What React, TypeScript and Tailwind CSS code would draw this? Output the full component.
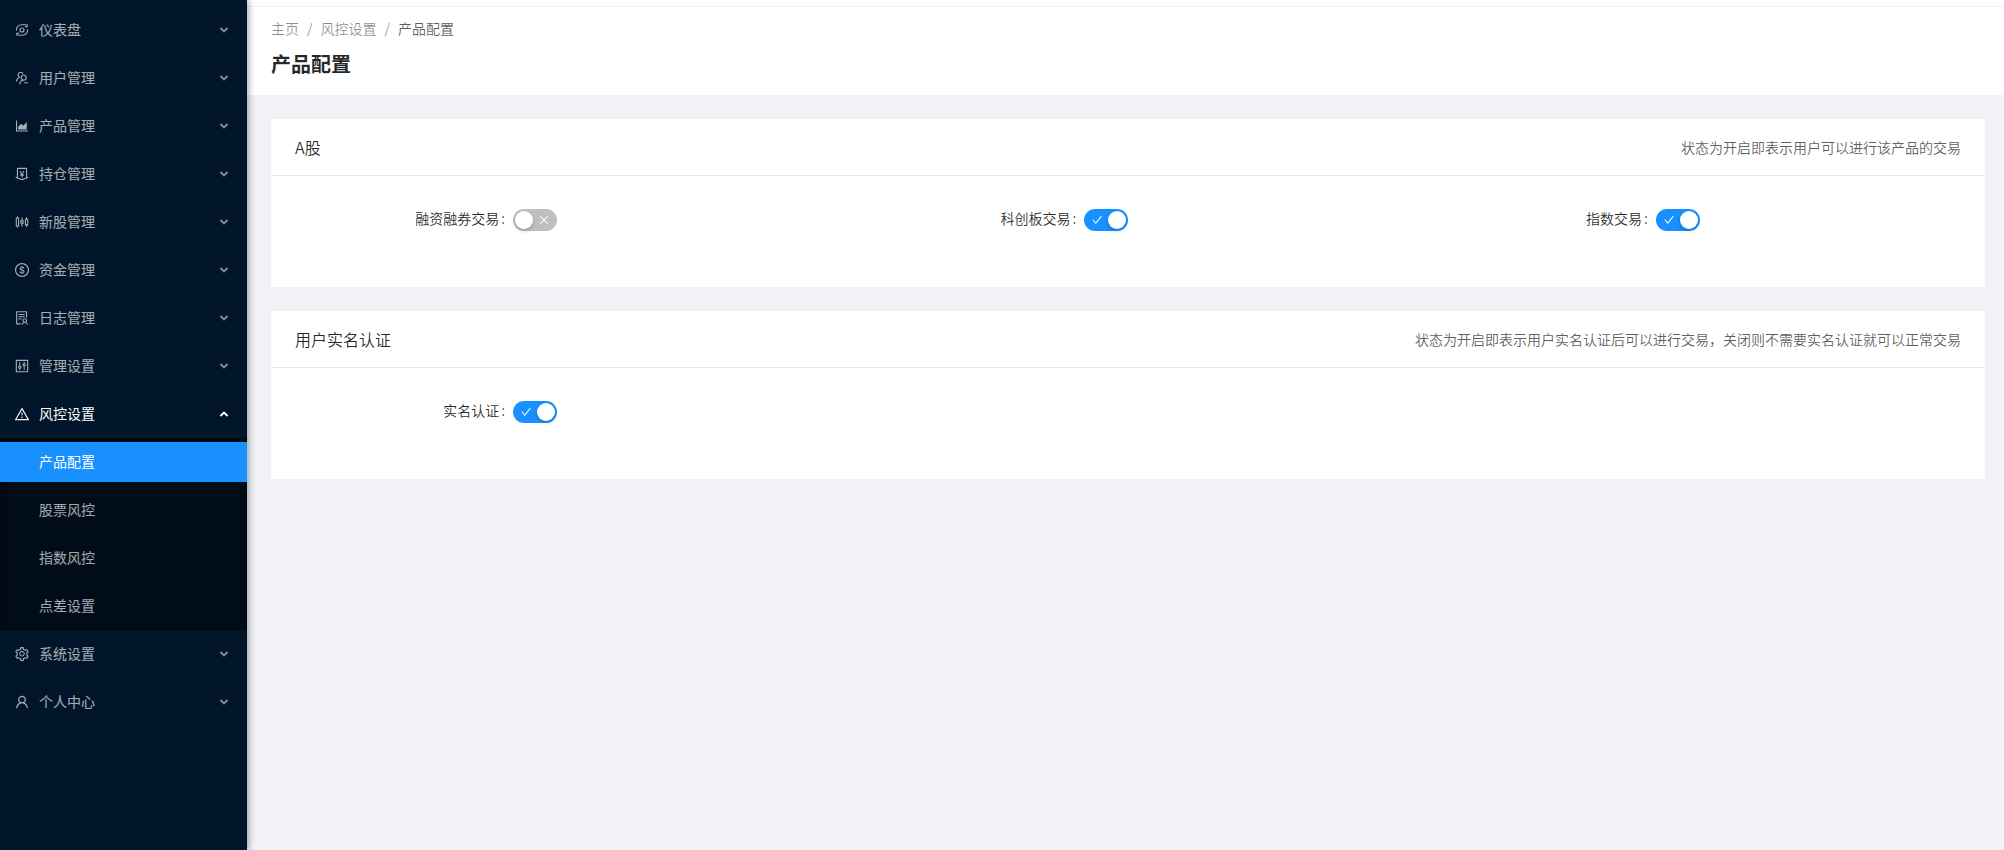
import { useId, useState } from "react";
import type { ReactNode } from "react";
import type { IconType } from "react-icons";
import {
  AiOutlineAreaChart,
  AiOutlineCheck,
  AiOutlineClose,
  AiOutlineControl,
  AiOutlineDollar,
  AiOutlineMoneyCollect,
  AiOutlineSetting,
  AiOutlineSliders,
  AiOutlineSolution,
  AiOutlineUser,
  AiOutlineUsergroupDelete,
  AiOutlineWarning,
} from "react-icons/ai";

type MenuEntry = {
  label: string;
  icon: IconType | typeof DashboardIcon;
  children?: string[];
};

function DashboardIcon({ className }: { className?: string }) {
  return (
    <svg
      viewBox="0 0 16 16"
      fill="none"
      stroke="currentColor"
      strokeWidth="1.1"
      className={className}
      aria-hidden="true"
    >
      <circle cx="8" cy="8" r="2" />
      <path d="M2.4 8.6C2 5.2 4.4 2.8 8 2.8h4.4" />
      <path d="M11 4.6h2.2V2.2" />
      <path d="M13.6 7.4c.4 3.4-2 5.8-5.6 5.8H3.6" />
      <path d="M5 11.4H2.8v2.4" />
    </svg>
  );
}

const MENU: MenuEntry[] = [
  { label: "仪表盘", icon: DashboardIcon },
  { label: "用户管理", icon: AiOutlineUsergroupDelete },
  { label: "产品管理", icon: AiOutlineAreaChart },
  { label: "持仓管理", icon: AiOutlineMoneyCollect },
  { label: "新股管理", icon: AiOutlineSliders },
  { label: "资金管理", icon: AiOutlineDollar },
  { label: "日志管理", icon: AiOutlineSolution },
  { label: "管理设置", icon: AiOutlineControl },
  {
    label: "风控设置",
    icon: AiOutlineWarning,
    children: ["产品配置", "股票风控", "指数风控", "点差设置"],
  },
  { label: "系统设置", icon: AiOutlineSetting },
  { label: "个人中心", icon: AiOutlineUser },
];

function Arrow({ open }: { open: boolean }) {
  return (
    <svg
      viewBox="0 0 10 8"
      fill="none"
      stroke="currentColor"
      strokeWidth="1.8"
      className={`h-2 w-2.5 ${open ? "rotate-180" : "opacity-80"}`}
      aria-hidden="true"
    >
      <path d="M1.4 2L5 5.4 8.6 2" />
    </svg>
  );
}

function Sidebar() {
  const [open, setOpen] = useState("风控设置");
  const [selected, setSelected] = useState("产品配置");

  return (
    <aside className="relative z-10 w-[247px] shrink-0 bg-[#001529] pt-1.5 shadow-[2px_0_6px_rgba(0,21,41,0.35)]">
      <nav>
        <ul>
          {MENU.map(({ label, icon: Icon, children }) => {
            const isOpen = open === label;
            return (
              <li key={label}>
                <div className="py-1">
                  <button
                    onClick={() => setOpen(isOpen ? "" : label)}
                    className={`flex h-10 w-full items-center pl-3.5 pr-[18px] text-sm hover:text-white ${
                      isOpen ? "text-white" : "text-white/65"
                    }`}
                  >
                    <Icon className="mr-[9px] h-4 w-4" />
                    <span className="pb-0.5 font-normal">{label}</span>
                    <span className="ml-auto">
                      <Arrow open={isOpen} />
                    </span>
                  </button>
                </div>
                {isOpen && children && (
                  <ul className="bg-[#000c17] shadow-[inset_0_2px_8px_rgba(0,0,0,0.45)]">
                    {children.map((child) => (
                      <li key={child} className="py-1">
                        <a
                          href="#"
                          onClick={() => setSelected(child)}
                          className={`flex h-10 items-center pb-0.5 pl-[39px] text-sm font-normal hover:text-white ${
                            selected === child
                              ? "bg-[#1890ff] text-white"
                              : "text-white/65"
                          }`}
                        >
                          {child}
                        </a>
                      </li>
                    ))}
                  </ul>
                )}
              </li>
            );
          })}
        </ul>
      </nav>
    </aside>
  );
}

function SwitchField({
  label,
  defaultChecked = false,
}: {
  label: string;
  defaultChecked?: boolean;
}) {
  const id = useId();
  const [checked, setChecked] = useState(defaultChecked);

  return (
    <div className="grid h-10 grid-cols-[5fr_7fr] items-center">
      <label
        htmlFor={id}
        className="pr-2 pb-1 text-right text-sm text-black/85"
      >
        {label}
        <span className="ml-0.5">:</span>
      </label>
      <button
        id={id}
        role="switch"
        aria-checked={checked}
        onClick={() => setChecked(!checked)}
        className={`flex h-[22px] w-11 items-center justify-between rounded-full px-0.5 text-white ${
          checked ? "flex-row-reverse bg-[#1890ff]" : "bg-black/25"
        }`}
      >
        <span className="h-[18px] w-[18px] rounded-full bg-white shadow-[0_2px_4px_rgba(0,35,11,0.2)]" />
        {checked ? (
          <AiOutlineCheck className="ml-[5px] h-3 w-3" />
        ) : (
          <AiOutlineClose className="mr-[5px] h-3 w-3" />
        )}
      </button>
    </div>
  );
}

function Card({
  title,
  extra,
  children,
}: {
  title: string;
  extra: string;
  children: ReactNode;
}) {
  return (
    <section className="rounded-xs bg-white">
      <header className="flex h-[57px] items-center justify-between border-b border-[#e8e8e8] px-6 pb-px">
        <h2 className="text-base font-[350] text-black/85">{title}</h2>
        <p className="text-sm text-black/65">{extra}</p>
      </header>
      <div className="grid grid-cols-3 gap-x-12 px-6 pt-6 pb-[47px]">
        {children}
      </div>
    </section>
  );
}

export default function App() {
  return (
    <div className="flex min-h-screen bg-[#f0f2f5] font-['Noto_Sans_CJK_SC',sans-serif] font-[350]">
      <Sidebar />
      <main className="min-w-0 flex-1">
        <div className="h-[7px] border-b border-[#f0f0f0] bg-white" />
        <div className="bg-white px-6 pt-[11px] pb-[15px]">
          <nav className="flex text-sm leading-5 text-black/45">
            <a href="#">主页</a>
            <span className="mx-2">/</span>
            <a href="#">风控设置</a>
            <span className="mx-2">/</span>
            <span className="text-black/65">产品配置</span>
          </nav>
          <h1 className="mt-2.5 text-xl leading-8 font-bold text-black/85">
            产品配置
          </h1>
        </div>

        <div className="flex flex-col gap-6 py-6 pl-6 pr-[19px]">
          <Card title="A股" extra="状态为开启即表示用户可以进行该产品的交易">
            <SwitchField label="融资融券交易" />
            <SwitchField label="科创板交易" defaultChecked />
            <SwitchField label="指数交易" defaultChecked />
          </Card>
          <Card
            title="用户实名认证"
            extra="状态为开启即表示用户实名认证后可以进行交易，关闭则不需要实名认证就可以正常交易"
          >
            <SwitchField label="实名认证" defaultChecked />
          </Card>
        </div>
      </main>
    </div>
  );
}
